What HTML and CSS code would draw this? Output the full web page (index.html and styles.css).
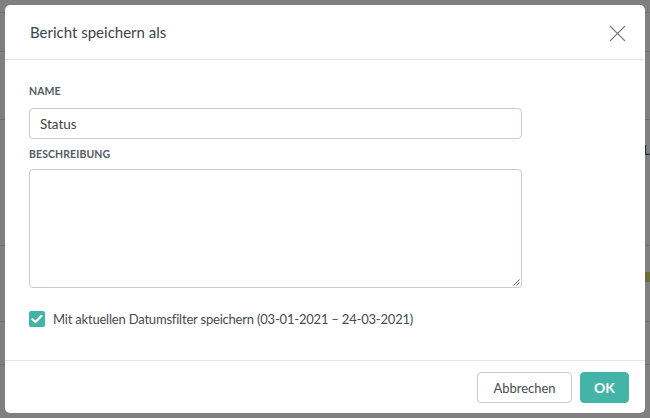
FILE: index.html
```html
<!DOCTYPE html>
<html lang="de">
<head>
<meta charset="utf-8">
<title>Bericht speichern als</title>
<link rel="stylesheet" href="styles.css">
</head>
<body>
<div class="backdrop">
  <div class="bg-row r1"></div>
  <div class="bg-row r2"></div>
  <div class="bg-row r3"></div>
  <div class="bg-row r4"><span class="bg-letter">L</span></div>
  <div class="bg-row r5"><span class="bg-bar"></span></div>
  <div class="bg-row r6"></div>
</div>
<div class="modal">
  <div class="modal-header">
    <h1 class="modal-title">Bericht speichern als</h1>
    <button class="close" aria-label="Schließen">
      <svg width="17" height="17" viewBox="0 0 17 17"><path d="M1 1L16 16M16 1L1 16" stroke="#7a7a7a" stroke-width="1.1" fill="none"/></svg>
    </button>
  </div>
  <div class="modal-body">
    <label class="field-label">NAME</label>
    <div class="input">Status</div>
    <label class="field-label second">BESCHREIBUNG</label>
    <div class="textarea">
      <svg class="grip" width="7" height="7" viewBox="0 0 7 7"><path d="M6.5 0.5L0.5 6.5M6.5 3.5L3.5 6.5" stroke="#555" stroke-width="1"/></svg>
    </div>
    <div class="check-row">
      <span class="checkbox">
        <svg width="12" height="10" viewBox="0 0 12 10"><path d="M1.5 5.2L4.5 8L10.5 1.8" stroke="#fff" stroke-width="2.2" fill="none" stroke-linecap="round" stroke-linejoin="round"/></svg>
      </span>
      <span class="check-label">Mit aktuellen Datumsfilter speichern (03-01-2021 – 24-03-2021)</span>
    </div>
  </div>
  <div class="modal-footer">
    <button class="btn btn-cancel">Abbrechen</button>
    <button class="btn btn-ok">OK</button>
  </div>
</div>
</body>
</html>
```

FILE: styles.css
```css
* { box-sizing: border-box; }
html, body { margin: 0; padding: 0; }
body {
  width: 650px;
  height: 418px;
  overflow: hidden;
  background: #808080;
  font-family: "Lato", "Liberation Sans", sans-serif;
  position: relative;
}
.backdrop { display: flex; flex-direction: column; }
.bg-row { border-bottom: 1px solid #6f6f70; position: relative; }
.r1 { height: 13px; }
.r2 { height: 39px; }
.r3 { height: 68px; }
.r4 { height: 126px; }
.r5 { height: 76px; }
.r6 { height: 43px; }
.bg-letter {
  position: absolute; right: 0; top: 22px;
  font-size: 13px; color: #1f2b44; font-weight: 600;
}
.bg-bar {
  position: absolute; right: 0; top: 26px;
  width: 6px; height: 10px; background: #6b6e3a;
}
.modal {
  position: absolute;
  top: 5px; left: 5px;
  width: 640px; height: 408px;
  background: #fff;
  border-radius: 5px;
  display: flex;
  flex-direction: column;
}
.modal-header {
  height: 55px;
  border-bottom: 1px solid #e3e5e8;
  display: flex;
  align-items: center;
  justify-content: space-between;
  padding: 0 19px 0 25px;
}
.modal-title {
  margin: 0;
  font-size: 15px;
  font-weight: 400;
  color: #3d434a;
  padding-bottom: 1px;
}
.close {
  border: 0; background: none; padding: 0; width: 17px; height: 17px;
  display: flex; margin-top: 2px;
}
.modal-body {
  flex: 1;
  padding: 25px 24px 0 24px;
  display: flex;
  flex-direction: column;
}
.field-label {
  font-size: 10.5px;
  font-weight: 700;
  color: #535b65;
  letter-spacing: 0.1px;
  line-height: 13px;
  height: 13px;
}
.field-label.second { margin-top: 9px; }
.input {
  margin-top: 10px;
  width: 493px;
  height: 31px;
  border: 1px solid #c6ccd5;
  border-radius: 4px;
  padding: 0 10px;
  font-size: 13.5px;
  color: #3d434a;
  display: flex;
  align-items: center;
}
.textarea {
  margin-top: 8px;
  width: 493px;
  height: 119px;
  border: 1px solid #c6ccd5;
  border-radius: 4px;
  position: relative;
}
.grip { position: absolute; right: 1px; bottom: 1px; }
.check-row {
  margin-top: 23px;
  display: flex;
  align-items: center;
  gap: 8px;
}
.checkbox {
  width: 16px; height: 16px;
  background: #44b4a6;
  border-radius: 2px;
  display: flex; align-items: center; justify-content: center;
}
.check-label {
  font-size: 13px;
  letter-spacing: -0.2px;
  color: #454b52;
}
.modal-footer {
  height: 53px;
  border-top: 1px solid #e3e5e8;
  display: flex;
  justify-content: flex-end;
  align-items: flex-start;
  padding: 11px 16px 0 0;
  gap: 8px;
}
.btn {
  height: 31px;
  border-radius: 4px;
  font-family: inherit;
  font-size: 13px;
  padding: 0;
  cursor: pointer;
}
.btn-cancel {
  width: 95px;
  background: #fff;
  border: 1px solid #c6ccd5;
  color: #454b52;
}
.btn-ok {
  width: 49px;
  background: #44b4a6;
  border: 1px solid #44b4a6;
  color: #fff;
  font-weight: 700;
  font-size: 14px;
}
```
